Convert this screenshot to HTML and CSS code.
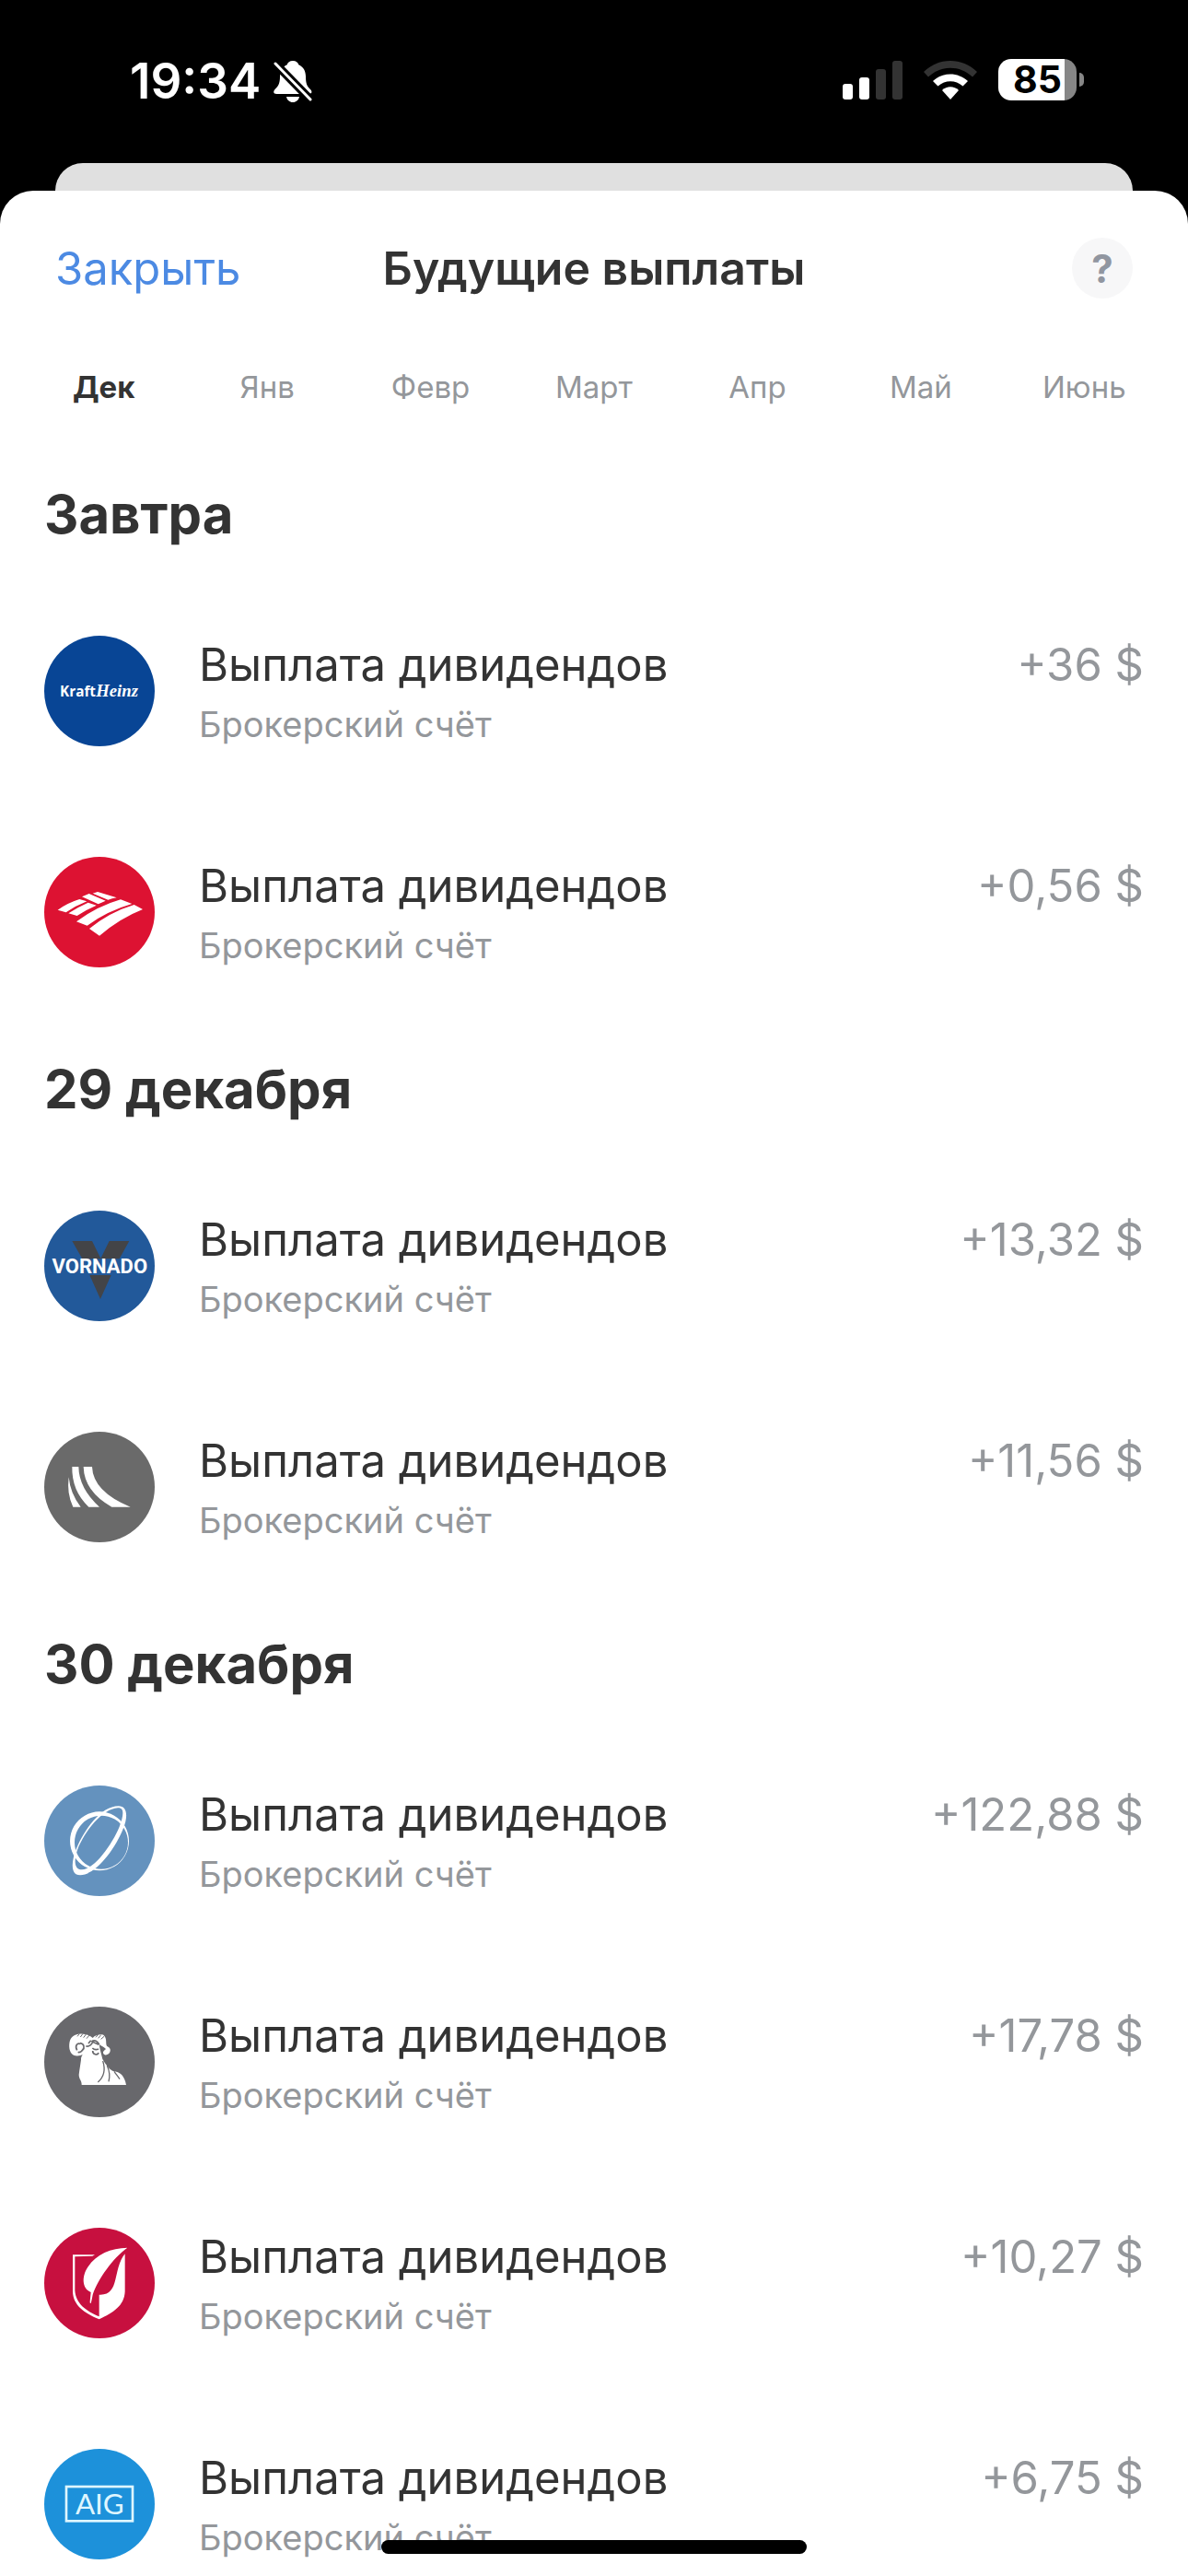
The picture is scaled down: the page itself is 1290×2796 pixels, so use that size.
FILE: index.html
```html
<!DOCTYPE html>
<html lang="ru">
<head>
  <meta charset="UTF-8" />
  <meta name="viewport" content="width=device-width, initial-scale=1.0"/>
  <title>Будущие выплаты</title>
  <link rel="stylesheet" href="styles.css">
</head>
<body>

<!-- Status bar -->
<div class="status-bar">
  <div class="status-left">
    <span class="time">19:34</span>
    <svg class="icon-bell" viewBox="0 0 42 45" aria-hidden="true">
      <path fill="#fff" d="M21 0c3.500 0 5.500 1.800 6.300 4.200C32.500 6.800 35 11 35 17c0 8 1.500 10.500 5 14 2.500 2.500 1.500 5-1.500 5H3.500C0 36-.8 33.500 1.500 31 5 27.500 7 25 7 17 7 11 9.500 6.800 14.700 4.200 15.500 1.800 17.500 0 21 0zM14 39h14c-.6 3.500-3.500 6-7 6s-6.400-2.500-7-6z"/>
      <path stroke="#000" stroke-width="9" d="M1 2l40 41"/>
      <path stroke="#fff" stroke-width="3" stroke-linecap="round" d="M2 3l38 39"/>
    </svg>
  </div>
  <div class="status-right">
    <svg class="icon-signal" viewBox="0 0 65 42" aria-hidden="true">
      <rect x="0" y="25" width="11" height="17" rx="3" fill="#fff"/>
      <rect x="18" y="18" width="11" height="24" rx="3" fill="#fff"/>
      <rect x="36" y="9" width="11" height="33" rx="3" fill="#333"/>
      <rect x="54" y="0" width="11" height="42" rx="3" fill="#333"/>
    </svg>
    <svg class="icon-wifi" viewBox="0 0 58 42" aria-hidden="true">
      <path fill="#333" d="M0 12C16-4 42-4 58 12l-5 5.500C39 4.500 19 4.500 5 17.500z"/>
      <path fill="#fff" d="M10 22c11-10 27-10 38 0l-5.500 5.500c-8-7-19-7-27 0z"/>
      <path fill="#fff" d="M20 32c5-5 13-5 18 0l-9 10z"/>
    </svg>
    <div class="battery"><span>85</span></div>
  </div>
</div>

<div class="sheet-behind"></div>

<main class="sheet">
  <header>
    <button type="button" class="close">Закрыть</button>
    <h1>Будущие выплаты</h1>
    <button type="button" class="help" aria-label="Помощь">?</button>
  </header>

  <nav class="months">
    <button type="button" class="active">Дек</button>
    <button type="button">Янв</button>
    <button type="button">Февр</button>
    <button type="button">Март</button>
    <button type="button">Апр</button>
    <button type="button">Май</button>
    <button type="button">Июнь</button>
  </nav>

  <div class="feed">
    <section>
      <h2>Завтра</h2>
      <ul>
        <li class="payout">
          <svg class="logo kraft" viewBox="36 30 360 360" aria-hidden="true">
            <text class="kraft-word" x="87" y="228">Kraft</text>
            <text class="heinz-word" x="205" y="228">Heinz</text>
          </svg>
          <div class="info">
            <p class="name">Выплата дивидендов</p>
            <p class="account">Брокерский счёт</p>
          </div>
          <span class="amount">+36 $</span>
        </li>
        <li class="payout">
          <svg class="logo bofa" viewBox="36 30 360 360" aria-hidden="true">
            <path fill="#fff" d="M80 203Q112 180 151 168L175 175Q139 189 107 211zM115 214Q147 193 179 179L206 188Q173 202 143 222zM159 160L182 150L236 173Q225 178 212 184zM194 149L210 144L272 163Q257 166 244 170zM141 241Q208 191 285 169L322 183Q242 206 176 254zM183 264Q249 210 329 186L357 201Q283 230 216 287z"/>
          </svg>
          <div class="info">
            <p class="name">Выплата дивидендов</p>
            <p class="account">Брокерский счёт</p>
          </div>
          <span class="amount">+0,56 $</span>
        </li>
      </ul>
    </section>

    <section>
      <h2>29 декабря</h2>
      <ul>
        <li class="payout">
          <svg class="logo vornado" viewBox="36 30 360 360" aria-hidden="true">
            <path fill="#434447" d="M127 129h65l28 57 28-57h65l-32 58H160zM184 240h70l-35 78z"/>
            <text x="217" y="234" text-anchor="middle">VORNADO</text>
          </svg>
          <div class="info">
            <p class="name">Выплата дивидендов</p>
            <p class="account">Брокерский счёт</p>
          </div>
          <span class="amount">+13,32 $</span>
        </li>
        <li class="payout">
          <svg class="logo curve" viewBox="36 30 360 360" aria-hidden="true">
            <path fill="#fff" d="M116 178Q121 232 155 275H130Q109 232 116 178zM127 144h21Q149 214 216 275H181Q125 222 127 144zM164 144h28Q195 225 317 275H256Q166 224 164 144z"/>
          </svg>
          <div class="info">
            <p class="name">Выплата дивидендов</p>
            <p class="account">Брокерский счёт</p>
          </div>
          <span class="amount">+11,56 $</span>
        </li>
      </ul>
    </section>

    <section>
      <h2>30 декабря</h2>
      <ul>
        <li class="payout">
          <svg class="logo orbit" viewBox="36 30 360 360" aria-hidden="true">
            <!-- crescent-weighted rings: outer ellipse minus a shifted inner one -->
            <path fill="#fff" fill-rule="evenodd" d="M216 115a96 96 0 1 0 .1 0zM222 128a87 87 0 1 1-.1 0z"/>
            <path fill="#fff" fill-rule="evenodd" d="M278 97C306 97 310 128 294 169C268 236 205 321 153 322C121 322 124 279 140 238C166 174 221 97 278 97zM276 103C225 106 168 179 144 240C132 276 134 304 159 304C200 302 257 222 281 164C295 127 298 102 276 103z"/>
          </svg>
          <div class="info">
            <p class="name">Выплата дивидендов</p>
            <p class="account">Брокерский счёт</p>
          </div>
          <span class="amount">+122,88 $</span>
        </li>
        <li class="payout">
          <svg class="logo ram" viewBox="36 30 360 360" aria-hidden="true">
            <path fill="#fff" d="M158 285C159 272 149 266 149 252C151 235 154 218 156 203C155 196 159 191 161 186C155 190 141 192 132 188C117 181 115 156 120 140C126 123 146 116 164 119C177 120 187 126 194 132C202 123 217 119 229 122C242 134 235 148 240 158C246 163 253 164 251 175C249 188 233 191 229 183C225 176 234 171 237 168C229 159 220 158 215 152C217 169 223 186 226 201C236 218 248 234 260 240C284 242 298 256 303 285z"/>
            <path fill="none" stroke="#68686c" stroke-width="5" d="M143 172C135 158 143 148 153 151M153 149C167 151 168 165 161 171C157 177 150 180 146 178M172 158C181 162 191 154 194 145L214 154M190 144C201 136 209 143 215 153M193 165C199 171 206 171 213 168M194 174C194 186 210 190 213 180M188 140L180 150"/>
            <path fill="none" stroke="#68686c" stroke-width="4" d="M227 207C235 232 235 255 211 276M241 222C250 242 250 259 246 274M264 241C271 251 277 258 282 266"/>
            <path fill="none" stroke="#68686c" stroke-width="3" d="M144 127l7-9M154 129l8-11M164 131l9-12M174 134l9-11M204 130l8-9M212 133l9-11M221 136l10-9"/>
          </svg>
          <div class="info">
            <p class="name">Выплата дивидендов</p>
            <p class="account">Брокерский счёт</p>
          </div>
          <span class="amount">+17,78 $</span>
        </li>
        <li class="payout">
          <svg class="logo leaf" viewBox="36 30 360 360" aria-hidden="true">
            <path fill="#fff" d="M129 118H201L193 122L136 124V234C139 278 173 301 215 319V248C284 252 257 168 299 115V238C297 284 261 307 215 328C166 308 130 282 129 238z"/>
            <path fill="#fff" d="M307 95C259 130 213 194 194 248C192 259 190 269 188 276Q184 277 185 270L188 240C159 229 157 188 179 157C205 116 254 96 307 95z"/>
          </svg>
          <div class="info">
            <p class="name">Выплата дивидендов</p>
            <p class="account">Брокерский счёт</p>
          </div>
          <span class="amount">+10,27 $</span>
        </li>
        <li class="payout">
          <svg class="logo aig" viewBox="36 30 360 360" aria-hidden="true">
            <rect x="108" y="153" width="216" height="112" fill="none" stroke="#dff6ff" stroke-width="8"/>
            <text x="217" y="244" text-anchor="middle">AIG</text>
          </svg>
          <div class="info">
            <p class="name">Выплата дивидендов</p>
            <p class="account">Брокерский счёт</p>
          </div>
          <span class="amount">+6,75 $</span>
        </li>
      </ul>
    </section>
  </div>
</main>

<div class="home-indicator"></div>

</body>
</html>
```
FILE: styles.css
```css
* { box-sizing: border-box; }

body {
  margin: 0;
  height: 100vh;
  display: flex;
  flex-direction: column;
  overflow: hidden;
  background: #000;
  color: #333;
  font-family: Inter, "Noto Sans", sans-serif;
}

h1, h2, p, ul {
  margin: 0;
  padding: 0;
}

ul { list-style: none; }

button {
  padding: 0;
  border: none;
  background: none;
  font-family: inherit;
  cursor: pointer;
}

/* Status bar */
.status-bar {
  flex: none;
  height: 177px;
  padding: 56px 121px 0 141px;
  display: flex;
  justify-content: space-between;
  align-items: flex-start;
  color: #fff;
}

.status-left, .status-right {
  display: flex;
  align-items: center;
  height: 64px;
}

.status-left { gap: 14px; }

.status-right {
  gap: 23px;
  height: 61px;
}

.time {
  font-size: 53px;
  font-weight: 600;
}

.icon-bell {
  width: 42px;
  height: 45px;
}

.icon-signal {
  width: 65px;
  height: 42px;
}

.icon-wifi {
  width: 58px;
  height: 42px;
}

.battery {
  position: relative;
  width: 85px;
  height: 45px;
  border-radius: 14px;
  background: linear-gradient(to right, #fff 85%, #868686 85%);
  color: #000;
  font-size: 41px;
  font-weight: 700;
  line-height: 45px;
  text-align: center;
}

.battery::after {
  content: "";
  position: absolute;
  right: -8px;
  top: 15px;
  width: 5px;
  height: 15px;
  border-radius: 0 5px 5px 0;
  background: #868686;
}

/* Sheet */
.sheet-behind {
  flex: none;
  height: 30px;
  margin: 0 60px;
  border-radius: 30px 30px 0 0;
  background: #e0e0e0;
}

.sheet {
  flex: 1;
  min-height: 0;
  display: flex;
  flex-direction: column;
  border-radius: 36px 36px 0 0;
  background: #fff;
}

header {
  flex: none;
  height: 168px;
  padding: 0 60px;
  display: grid;
  grid-template-columns: 1fr auto 1fr;
  align-items: center;
}

h1 {
  font-size: 50px;
  font-weight: 600;
}

.close {
  justify-self: start;
  color: #4c8ae3;
  font-size: 49px;
}

.help {
  justify-self: end;
  width: 66px;
  height: 66px;
  border-radius: 50%;
  background: #f7f7f8;
  color: #9196a0;
  font-size: 42px;
  font-weight: 700;
}

.months {
  flex: none;
  height: 90px;
  padding: 0 24px;
  display: grid;
  grid-template-columns: repeat(7, 1fr);
}

.months button {
  color: #94979b;
  font-size: 33px;
}

.months .active {
  color: #333;
  font-weight: 700;
}

/* Payout list */
.feed {
  flex: 1;
  min-height: 0;
  padding: 21px 48px 0;
  overflow-y: auto;
  scrollbar-width: none;
}

h2 {
  font-size: 58px;
  font-weight: 700;
  line-height: 144px;
}

.payout {
  height: 240px;
  padding: 60px 0;
  display: flex;
  gap: 48px;
}

.logo {
  flex: none;
  width: 120px;
  height: 120px;
  border-radius: 50%;
}

.info { flex: 1; }

.name, .amount {
  font-size: 49px;
  line-height: 64px;
}

.account {
  color: #94979b;
  font-size: 38px;
  line-height: 64px;
}

.amount { color: #94979b; }

/* Company logos */
.logo text { fill: #fff; }
.kraft { background: #084595; }
.bofa { background: #dd1232; }
.vornado { background: #22599a; }
.curve { background: #6a6a6a; }
.orbit { background: #6492be; }
.ram { background: #68686c; }
.leaf { background: #c7103f; }
.aig { background: #1d91da; }

.kraft-word {
  font: 700 46px "Open Sans", sans-serif;
}

.heinz-word {
  font: italic 700 56px "Liberation Serif", serif;
}

.vornado text {
  font: 700 66px Roboto, sans-serif;
}

.aig text {
  fill: #dff6ff;
  font: 400 94px Lato, sans-serif;
}

.home-indicator {
  position: fixed;
  left: 50%;
  bottom: 24px;
  width: 462px;
  height: 15px;
  margin-left: -231px;
  border-radius: 8px;
  background: #000;
}
```
